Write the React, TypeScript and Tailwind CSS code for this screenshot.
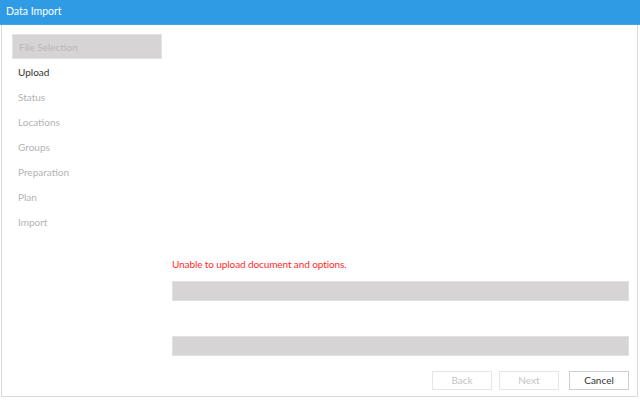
import React from "react";

const pasos = [
  "File Selection",
  "Upload",
  "Status",
  "Locations",
  "Groups",
  "Preparation",
  "Plan",
  "Import",
];

export default function App() {
  const actual = "Upload";

  return (
    <div className="w-[640px] h-[400px] bg-white font-['Lato',sans-serif] text-[10px] overflow-hidden">
      {/* Barra de título */}
      <div className="h-[25px] bg-[#2e9be4] border-b border-[#3fa3e6] flex items-center px-[6px] text-white text-[10.5px]">
        Data Import
      </div>

      <div className="ml-px mr-[2px] h-[372px] border-l border-r border-b border-[#dadada] flex">
        {/* Pasos del asistente */}
        <nav className="w-[170px] pl-[10px] pt-[9px] flex flex-col">
          {pasos.map((paso) => {
            const seleccionado = paso === "File Selection";
            return (
              <div
                key={paso}
                className={`h-[25px] w-[150px] px-[6px] pt-[2px] flex items-center ${
                  seleccionado
                    ? "bg-[#d6d4d5] border border-[#e4e3e3] text-[#b9b7b8]"
                    : paso === actual
                    ? "text-[#333333]"
                    : "text-[#b3b3b3]"
                }`}
              >
                {paso}
              </div>
            );
          })}
        </nav>

        {/* Contenido */}
        <main className="flex-1 flex flex-col justify-end pr-[8px] pb-[6px]">
          <p className="text-[#ff2b2b] leading-[15px] tracking-[-0.1px]">Unable to upload document and options.</p>
          <div className="mt-[9px] h-[20px] bg-[#d6d4d5] border border-[#e2e1e1]" />
          <div className="mt-[35px] h-[20px] bg-[#d6d4d5] border border-[#e2e1e1]" />
          <div className="mt-[15px] flex justify-end">
            <button className="w-[60px] h-[19px] border border-[#e6e6e6] bg-white text-[#c4c4c4]">Back</button>
            <button className="ml-[7px] w-[60px] h-[19px] border border-[#e6e6e6] bg-white text-[#c4c4c4]">Next</button>
            <button className="ml-[10px] w-[60px] h-[19px] border border-[#cfcfcf] bg-white text-[#333333]">Cancel</button>
          </div>
        </main>
      </div>
    </div>
  );
}
